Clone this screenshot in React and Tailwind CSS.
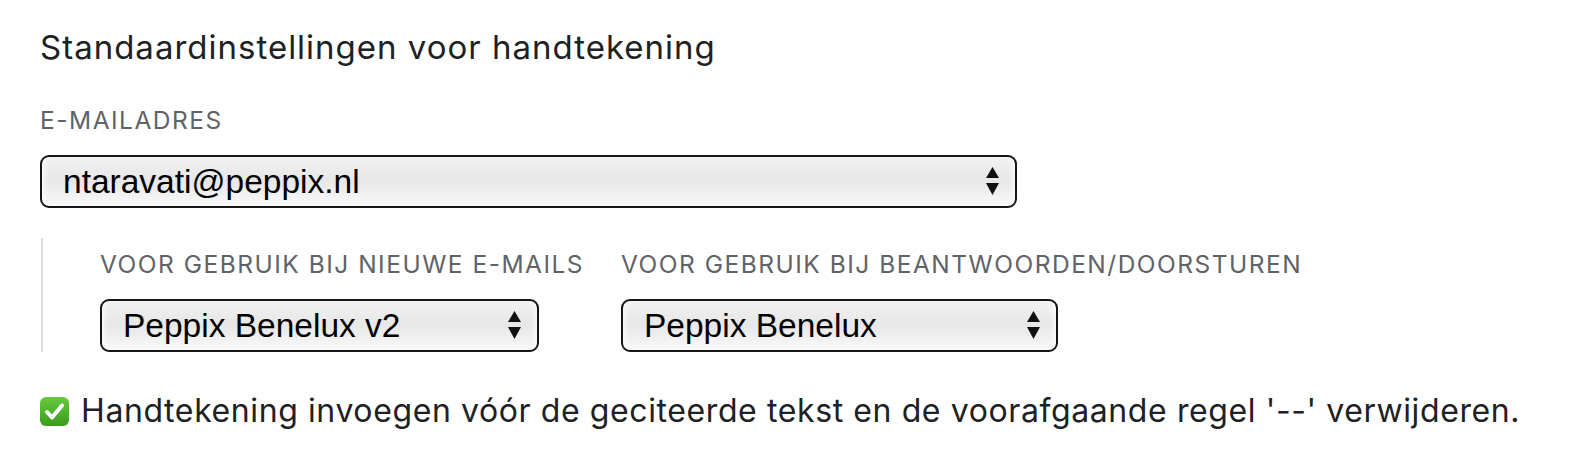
const sans = { fontFamily: "Inter, Roboto, 'Noto Sans', sans-serif" };

function Arrows() {
  return (
    <svg width="13" height="29" viewBox="0 0 13 29" className="shrink-0">
      <path d="M6.5 0 L13 11 L0 11 Z" fill="#111" />
      <path d="M0 16 L13 16 L6.5 28 Z" fill="#111" />
    </svg>
  );
}

function FakeSelect({ value, width }) {
  return (
    <div
      className={`${width} h-[53px] flex items-center justify-between pl-[21px] pr-[16px] rounded-[9px] border-2 border-[#151515] bg-gradient-to-b from-[#f1f1f1] via-[#e7e7e7] to-[#f9f9f9] shadow-[inset_6px_0_6px_-4px_rgba(255,255,255,0.9),inset_-6px_0_6px_-4px_rgba(255,255,255,0.9)]`}
    >
      <span className="text-[33.5px] leading-none text-black font-['Liberation_Sans',Arial,sans-serif]">{value}</span>
      <Arrows />
    </div>
  );
}

function CheckIcon() {
  return (
    <svg width="29" height="29" viewBox="0 0 29 29" className="shrink-0">
      <defs>
        <linearGradient id="g" x1="0" y1="0" x2="0" y2="1">
          <stop offset="0" stopColor="#66c93f" />
          <stop offset="1" stopColor="#3a9c1c" />
        </linearGradient>
      </defs>
      <rect x="0" y="0" width="29" height="29" rx="6" fill="url(#g)" />
      <path d="M7 15 L12 20.5 L22 8.5" fill="none" stroke="#fff" strokeWidth="4" strokeLinecap="round" strokeLinejoin="round" />
    </svg>
  );
}

export default function App() {
  return (
    <div className="w-[1576px] h-[450px] bg-white pl-[40px] pt-[27px]" style={sans}>
      <h2 className="text-[33px] leading-[40px] tracking-[1px] text-[#202124]">Standaardinstellingen voor handtekening</h2>

      <div className="mt-[39px] text-[24.5px] leading-[28px] tracking-[1.5px] text-[#5f6368]">E-MAILADRES</div>

      <div className="mt-[21px]">
        <FakeSelect value="ntaravati@peppix.nl" width="w-[977px]" />
      </div>

      <div className="mt-[30px] ml-[1px] border-l-2 border-[#dadce0] pl-[57px] pt-[12px] grid grid-cols-[521px_440px]">
        <div className="flex flex-col">
          <div className="text-[24.5px] leading-[28px] tracking-[1.5px] text-[#5f6368] whitespace-nowrap">VOOR GEBRUIK BIJ NIEUWE E-MAILS</div>
          <div className="mt-[21px]">
            <FakeSelect value="Peppix Benelux v2" width="w-[439px]" />
          </div>
        </div>
        <div className="flex flex-col">
          <div className="text-[24.5px] leading-[28px] tracking-[1.5px] text-[#5f6368] whitespace-nowrap">VOOR GEBRUIK BIJ BEANTWOORDEN/DOORSTUREN</div>
          <div className="mt-[21px]">
            <FakeSelect value="Peppix Benelux" width="w-[437px]" />
          </div>
        </div>
      </div>

      <div className="mt-[39px] flex items-center gap-[12px]">
        <CheckIcon />
        <span className="text-[32px] leading-[40px] tracking-[0.6px] text-[#202124]">
          Handtekening invoegen vóór de geciteerde tekst en de voorafgaande regel '--' verwijderen.
        </span>
      </div>
    </div>
  );
}
